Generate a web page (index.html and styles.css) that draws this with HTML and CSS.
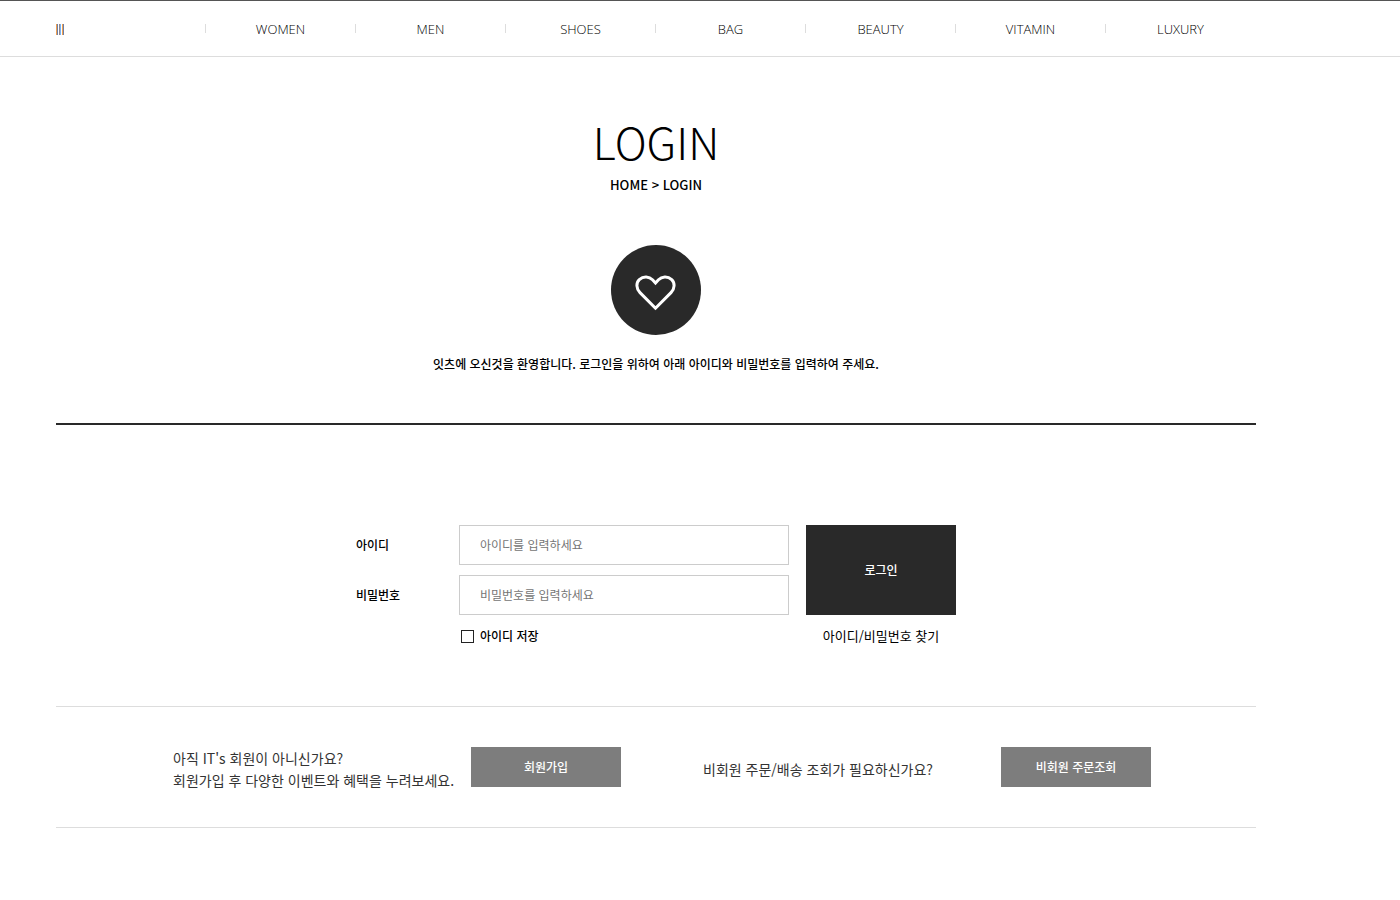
FILE: index.html
```html
<!DOCTYPE html>
<html lang="ko">
<head>
<meta charset="utf-8">
<meta name="viewport" content="width=device-width, initial-scale=1">
<title>LOGIN</title>
<link rel="stylesheet" href="styles.css">
</head>
<body>
<header class="header">
  <nav class="nav wrap">
    <div class="nav-first">
      <button class="menu-button" type="button" aria-label="menu">
        <svg width="8" height="11" viewBox="0 0 8 11" shape-rendering="crispEdges" aria-hidden="true">
          <path fill="#f0a050" d="M0 0h1v11H0zM6 0h1v11H6z"/>
          <path fill="#6b7fa8" d="M1 0h1v11H1zM7 0h1v11H7z"/>
          <path fill="#8d8791" d="M3 0h1v11H3z"/>
          <path fill="#7cb4f0" d="M4 0h1v11H4z"/>
        </svg>
      </button>
    </div>
    <a class="nav-item" href="#">WOMEN</a>
    <a class="nav-item" href="#">MEN</a>
    <a class="nav-item" href="#">SHOES</a>
    <a class="nav-item" href="#">BAG</a>
    <a class="nav-item" href="#">BEAUTY</a>
    <a class="nav-item" href="#">VITAMIN</a>
    <a class="nav-item" href="#">LUXURY</a>
  </nav>
</header>
<main class="wrap">
  <section class="intro">
    <h1 class="title">LOGIN</h1>
    <p class="crumbs">HOME &gt; LOGIN</p>
    <div class="badge">
      <svg width="42" height="36" viewBox="0 0 42 36" fill="none" stroke="#fff" stroke-width="3" aria-hidden="true">
        <path d="M20.500 33.200L5 17.600C1 13.500 1 7.800 4.300 4.600C8.500 0.800 14.200 1.400 17.500 4.800L20.500 8L23.500 4.800C26.800 1.400 32.500 0.800 36.700 4.600C40 7.800 40 13.500 36 17.600Z"/>
      </svg>
    </div>
    <p class="welcome">잇츠에 오신것을 환영합니다. 로그인을 위하여 아래 아이디와 비밀번호를 입력하여 주세요.</p>
  </section>
  <form class="login">
    <label class="label" for="user">아이디</label>
    <input class="field" id="user" type="text" placeholder="아이디를 입력하세요">
    <label class="label" for="pass">비밀번호</label>
    <input class="field" id="pass" type="password" placeholder="비밀번호를 입력하세요">
    <button class="submit" type="submit">로그인</button>
    <div class="save">
      <input class="check" id="save" type="checkbox">
      <label for="save">아이디 저장</label>
    </div>
    <a class="find" href="#">아이디/비밀번호 찾기</a>
  </form>
  <section class="extra">
    <div class="extra-item">
      <p class="extra-text">아직 IT's 회원이 아니신가요?<br>회원가입 후 다양한 이벤트와 혜택을 누려보세요.</p>
      <button class="gray" type="button">회원가입</button>
    </div>
    <div class="extra-item">
      <p class="extra-text">비회원 주문/배송 조회가 필요하신가요?</p>
      <button class="gray" type="button">비회원 주문조회</button>
    </div>
  </section>
</main>
</body>
</html>
```
FILE: styles.css
```css
* { box-sizing: border-box; }
body {
  margin: 0;
  background: #fff;
  color: #000;
  font-family: "Noto Sans CJK KR", sans-serif;
  font-size: 12px;
  font-weight: 500;
  line-height: 20px;
}
h1, p { margin: 0; }
a { color: inherit; text-decoration: none; }
button, input { font: inherit; margin: 0; border-radius: 0; }
button { padding: 0; border: 0; cursor: pointer; }

.wrap { max-width: 1200px; margin: 0 144px 0 56px; }

.header { border-top: 1px solid #555; border-bottom: 1px solid #ddd; }
.nav {
  display: grid;
  grid-template-columns: calc(12.5% - 1px) repeat(7, 12.5%);
  align-items: center;
  height: 55px;
}
.nav-first { display: flex; }
.menu-button { display: flex; padding-top: 2px; background: none; }
.nav-item {
  display: flex;
  align-items: center;
  justify-content: center;
  color: #000;
  font-family: "Open Sans", sans-serif;
  font-weight: 300;
  font-size: 13px;
}
.nav-item::before { content: ""; width: 1px; height: 9px; background: #ddd; margin-right: auto; }
.nav-item::after { content: ""; margin-left: auto; }

.intro {
  display: flex;
  flex-direction: column;
  align-items: center;
  padding: 50px 0 49px;
  border-bottom: 2px solid #292929;
  text-align: center;
}
.title { font-size: 44px; font-weight: 300; line-height: 68px; }
.crumbs { font-size: 13px; }
.badge {
  display: flex;
  align-items: center;
  justify-content: center;
  width: 90px;
  height: 90px;
  margin: 50px 0 19px;
  padding-top: 5px;
  border-radius: 50%;
  background: #292929;
}

.login {
  display: grid;
  grid-template-columns: 103px 1fr 167px;
  grid-template-rows: 40px 40px 22px;
  row-gap: 10px;
  align-items: center;
  max-width: 600px;
  margin: 0 auto;
  padding: 100px 0 59px;
}
.field {
  width: 100%;
  height: 40px;
  padding: 0 20px 1px;
  border: 1px solid #ccc;
  background: #fff;
}
.field::placeholder { color: #757575; font-weight: 400; }
.submit {
  grid-column: 3;
  grid-row: 1 / 3;
  align-self: stretch;
  margin-left: 17px;
  background: #292929;
  color: #fff;
}
.save { grid-column: 2; display: flex; align-items: center; gap: 6px; padding-left: 2px; }
.check { appearance: none; width: 13px; height: 13px; border: 1px solid #222; background: #fff; }
.check:checked { background: #292929; }
.find { grid-column: 3; margin-left: 17px; text-align: center; font-size: 13px; font-weight: 400; }

.extra {
  display: grid;
  grid-template-columns: 1fr 1fr;
  padding: 40px 105px 36px 117px;
  column-gap: 82px;
  border-top: 1px solid #ddd;
  border-bottom: 1px solid #ddd;
}
.extra-item { display: flex; justify-content: space-between; }
.extra-text { color: #333; font-size: 14px; font-weight: 400; line-height: 22px; align-self: center; }
.gray { width: 150px; height: 40px; background: #7d7d7d; color: #fff; }
```
